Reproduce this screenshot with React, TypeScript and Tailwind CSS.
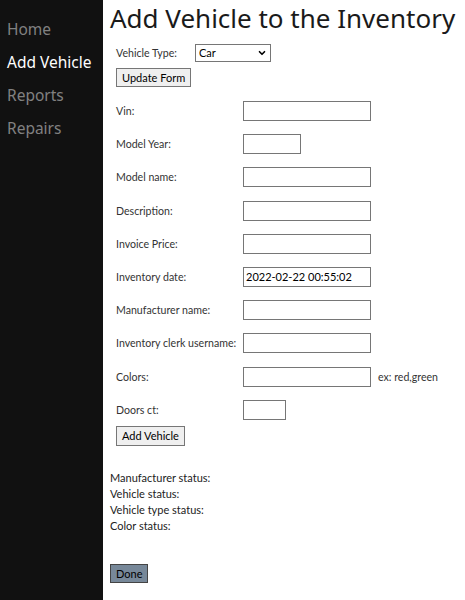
import React from "react";
import { ChevronDown } from "lucide-react";

const font = { fontFamily: "'Noto Sans', 'Open Sans', sans-serif" };
const small = { fontFamily: "Lato, 'Noto Sans', sans-serif" };

type Field = {
  label: string;
  width: string;
  value?: string;
  hint?: string;
};

const fields: Field[] = [
  { label: "Vin:", width: "w-[128px]" },
  { label: "Model Year:", width: "w-[58px]" },
  { label: "Model name:", width: "w-[128px]" },
  { label: "Description:", width: "w-[128px]" },
  { label: "Invoice Price:", width: "w-[128px]" },
  { label: "Inventory date:", width: "w-[128px]", value: "2022-02-22 00:55:02" },
  { label: "Manufacturer name:", width: "w-[128px]" },
  { label: "Inventory clerk username:", width: "w-[128px]" },
  { label: "Colors:", width: "w-[128px]", hint: "ex: red,green" },
  { label: "Doors ct:", width: "w-[43px]" },
];

const navItems = ["Home", "Add Vehicle", "Reports", "Repairs"];

export default function App() {
  return (
    <div className="flex min-h-[600px] w-[465px] bg-white text-[#222]" style={font}>
      {/* sidebar */}
      <nav className="w-[103px] shrink-0 bg-[#111] pt-[16px]">
        {navItems.map((item) => (
          <a
            key={item}
            className={`block h-[33px] pl-[7px] text-[15.5px] leading-[26px] ${
              item === "Add Vehicle" ? "text-white" : "text-[#818181]"
            }`}
          >
            {item}
          </a>
        ))}
      </nav>

      <main className="flex-1 pl-[7px]">
        <h1 className="mt-[2px] text-[26px] leading-[32px] font-normal text-[#1a1a1a]">
          Add Vehicle to the Inventory
        </h1>

        <div className="pl-[6px] pt-[10px] text-[10.6px] whitespace-nowrap text-[#333]" style={small}>
          <div className="flex h-[18px] items-center">
            <span className="w-[79px] pt-[2px]">Vehicle Type:</span>
            <div className="relative">
              <select
                className="h-[18px] w-[76px] appearance-none border border-[#767676] bg-white pl-[3px] text-[11px] text-black outline-none"
                style={small}
              >
                <option>Car</option>
              </select>
              <ChevronDown
                className="pointer-events-none absolute right-[4px] top-[4px] h-[10px] w-[10px] text-black"
                strokeWidth={4}
              />
            </div>
          </div>

          <button
            className="mt-[6px] h-[19px] border border-[#767676] bg-[#efefef] px-[5px] text-[11px] leading-none text-black"
            style={small}
          >
            Update Form
          </button>

          <div className="mt-[14px] flex flex-col gap-[13.2px]">
            {fields.map((f) => (
              <div key={f.label} className="flex h-[20px] items-center">
                <span className="w-[127px] shrink-0 pt-[2px]">{f.label}</span>
                <input
                  readOnly
                  defaultValue={f.value}
                  className={`${f.width} h-[20px] border border-[#767676] bg-white px-[2px] text-[11px] text-black outline-none`}
                  style={small}
                />
                {f.hint && <span className="ml-[7px] pt-[2px]">{f.hint}</span>}
              </div>
            ))}
          </div>

          <button
            className="mt-[6px] h-[20px] border border-[#767676] bg-[#efefef] px-[5px] text-[11px] leading-none text-black"
            style={small}
          >
            Add Vehicle
          </button>
        </div>

        <div className="mt-[24px] text-[11px] leading-[16px] text-[#222]" style={small}>
          <div>Manufacturer status:</div>
          <div>Vehicle status:</div>
          <div>Vehicle type status:</div>
          <div>Color status:</div>
        </div>

        <button
          className="mt-[30px] h-[19px] border border-[#444] bg-[#778899] px-[5px] text-[11px] leading-none text-black"
          style={small}
        >
          Done
        </button>
      </main>
    </div>
  );
}
